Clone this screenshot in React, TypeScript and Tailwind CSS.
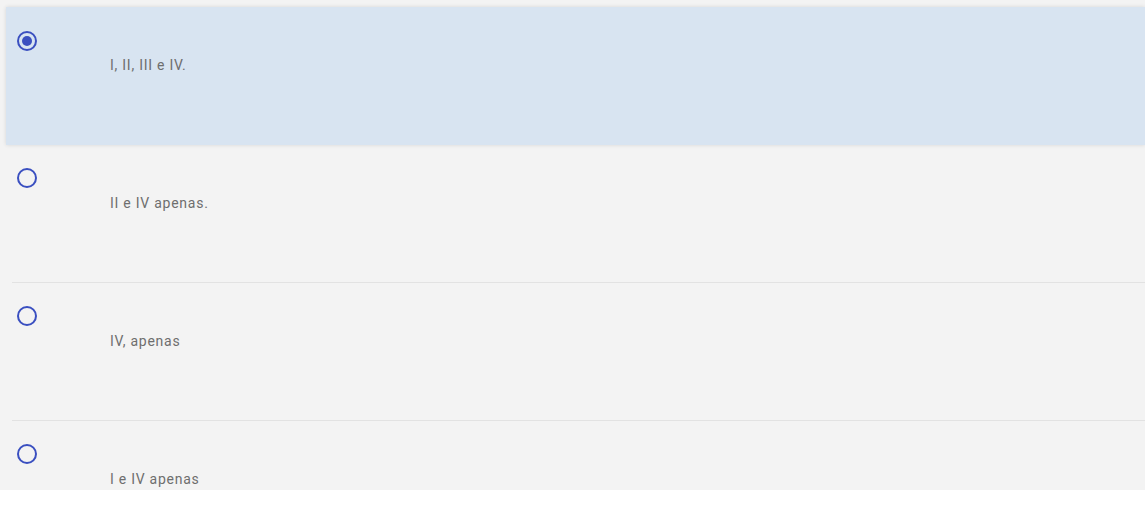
import React, { useState } from 'react';

const options = ['I, II, III e IV.', 'II e IV apenas.', 'IV, apenas', 'I e IV apenas'];

function Radio({ checked }: { checked: boolean }) {
  return (
    <span className="flex h-[20px] w-[20px] items-center justify-center rounded-full border-[2.5px] border-[#3a4fc0]">
      {checked && <span className="h-[10px] w-[10px] rounded-full bg-[#3a4fc0]" />}
    </span>
  );
}

function App() {
  const [selected, setSelected] = useState(0);

  return (
    <div className="min-h-screen bg-white" style={{ fontFamily: 'Roboto, "Liberation Sans", sans-serif' }}>
      <div className="h-[490px] overflow-hidden bg-[#f3f3f3] pt-[7px]">
        {options.map((text, i) => {
          const isSel = i === selected;
          return (
            <div
              key={i}
              onClick={() => setSelected(i)}
              className={
                isSel
                  ? 'ml-[6px] flex h-[138px] cursor-pointer bg-[#d8e4f1] shadow-[0_0_4px_rgba(0,0,0,0.12)]'
                  : 'ml-[12px] flex h-[138px] cursor-pointer border-b border-[#e2e2e2]'
              }
            >
              <div className={isSel ? 'pl-[11px] pt-[24px]' : 'pl-[5px] pt-[23px]'}>
                <Radio checked={isSel} />
              </div>
              <p
                className={
                  isSel
                    ? 'pl-[73px] pt-[48px] text-[14px] tracking-[0.75px] text-[#6e6e6e]'
                    : 'pl-[73px] pt-[48px] text-[14px] tracking-[0.75px] text-[#6e6e6e]'
                }
              >
                {text}
              </p>
            </div>
          );
        })}
      </div>
    </div>
  );
}

export default App;
